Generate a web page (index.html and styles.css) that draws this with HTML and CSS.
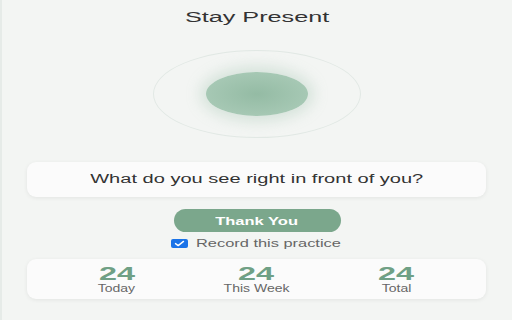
FILE: index.html
```html
<!DOCTYPE html>
<html>
<head>
<meta charset="utf-8">
<link rel="stylesheet" href="styles.css">
</head>
<body>
<main class="app">
  <header class="title-bar"><h1 class="title">Stay Present</h1></header>
  <section class="breath">
    <div class="ring"><div class="orb"></div></div>
  </section>
  <section class="card prompt"><p class="prompt-text">What do you see right in front of you?</p></section>
  <button class="thanks"><span class="thanks-text">Thank You</span></button>
  <label class="record">
    <span class="box"><svg viewBox="0 0 17 9" width="17" height="9"><path d="M4.5 4.6 L7.2 6.6 L12.5 2.4" fill="none" stroke="#fff" stroke-width="1.4" stroke-linecap="round" stroke-linejoin="round"/></svg></span>
    <span class="record-text">Record this practice</span>
  </label>
  <section class="card stats">
    <div class="stat"><span class="num">24</span><span class="lbl">Today</span></div>
    <div class="stat"><span class="num">24</span><span class="lbl">This Week</span></div>
    <div class="stat"><span class="num">24</span><span class="lbl">Total</span></div>
  </section>
</main>
</body>
</html>
```
FILE: styles.css
```css
html, body {
  margin: 0;
  padding: 0;
  width: 512px;
  height: 320px;
  overflow: hidden;
  background: #f3f5f3;
  font-family: "Liberation Sans", Arial, sans-serif;
}
.app {
  display: flex;
  flex-direction: column;
  align-items: center;
  width: 512px;
  height: 320px;
  border-left: 2px solid #e6ebe8;
  box-sizing: border-box;
}
.title-bar {
  height: 34px;
  display: flex;
  align-items: center;
  justify-content: center;
}
.title {
  margin: 0;
  font-size: 14px;
  font-weight: normal;
  color: #333;
  transform: scaleX(1.8);
  line-height: 14px;
}
.breath {
  height: 128px;
  display: flex;
  align-items: flex-start;
  justify-content: center;
  padding-top: 16px;
  box-sizing: border-box;
}
.ring {
  width: 206px;
  height: 86px;
  border: 1px solid #e1e8e4;
  border-radius: 50%;
  display: flex;
  align-items: center;
  justify-content: center;
}
.orb {
  width: 102px;
  height: 44px;
  border-radius: 50%;
  background: radial-gradient(ellipse at center, #94bba4 0%, #a6c8b4 70%, #b0cfbc 100%);
  box-shadow: 0 0 14px 6px rgba(160, 196, 175, 0.35);
}
.card {
  align-self: stretch;
  margin: 0 26px 0 25px;
  background: #fbfbfb;
  border-radius: 9px;
  box-shadow: 0 1px 4px rgba(0, 0, 0, 0.07);
}
.prompt {
  height: 35px;
  display: flex;
  align-items: center;
  justify-content: center;
}
.prompt-text {
  margin: 0 0 2px 0;
  font-size: 12px;
  color: #333;
  transform: scaleX(1.67);
}
.thanks {
  margin-top: 12px;
  width: 167px;
  height: 23px;
  border: none;
  border-radius: 12px;
  background: #7ba78c;
  display: flex;
  align-items: center;
  justify-content: center;
  padding: 0;
  font-family: inherit;
}
.thanks-text {
  color: #fff;
  font-size: 11px;
  font-weight: bold;
  transform: scaleX(1.5);
}
.record {
  margin-top: 5px;
  height: 12px;
  display: flex;
  align-items: center;
  gap: 8px;
  margin-left: -2px;
}
.box {
  width: 17px;
  height: 9px;
  border-radius: 2px;
  background: #1a73e8;
  display: flex;
}
.record-text {
  font-size: 11px;
  color: #666;
  transform: scaleX(1.49);
  transform-origin: left center;
  width: 145px;
}
.stats {
  margin-top: 10px;
  height: 40px;
  display: grid;
  grid-template-columns: repeat(3, 1fr);
  padding: 0 20px;
}
.stat {
  display: flex;
  flex-direction: column;
  align-items: center;
  padding-top: 7px;
}
.num {
  font-size: 18px;
  line-height: 16px;
  font-weight: bold;
  color: #6fa085;
  transform: scaleX(1.8);
}
.lbl {
  margin-top: 1px;
  font-size: 10px;
  line-height: 11px;
  color: #666;
  transform: scaleX(1.4);
}
```
